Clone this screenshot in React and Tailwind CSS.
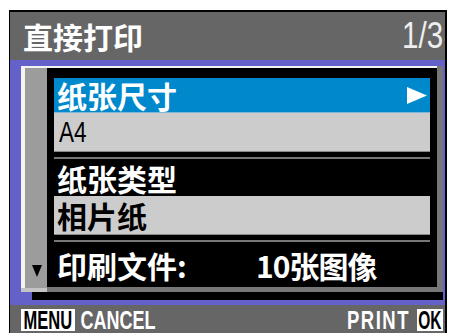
import React from "react";

const cjk = "font-['Noto_Sans_CJK_SC',sans-serif] font-bold";
const latin = "font-['Liberation_Sans',sans-serif]";

// one line in the black menu panel
const Row = ({ className, children }) => (
  <div className={`mx-[7px] flex items-center pl-[3px] ${className}`}>{children}</div>
);

const Label = ({ w, scale, className, children }) => (
  <div className={`flex h-[22px] items-center justify-center ${w} ${className}`}>
    <span className={`inline-block whitespace-nowrap ${scale}`}>{children}</span>
  </div>
);

export default function App() {
  return (
    <div className="h-[333px] w-[449px] overflow-hidden bg-white">
      <div className="ml-[9px] mt-[10px] flex h-[323px] w-[438px] flex-col border-l border-r-2 border-t-2 border-black">
        {/* title bar */}
        <div className="flex h-[48px] items-center justify-between bg-[#666666] pl-[13px] pr-[2px]">
          <span className={`${cjk} text-[30px] leading-none text-white`}>直接打印</span>
          <span className={`${latin} inline-block origin-right scale-x-[0.82] text-[36px] leading-none text-[#eeeeee]`}>
            1/3
          </span>
        </div>

        {/* purple body */}
        <div className="flex h-[245px] bg-[#6462c8] pl-[11px] pt-[6px]">
          <div className="flex h-[234px]">
            {/* left: scrollbar */}
            <div className="flex w-[26px] flex-col">
              <div className="h-[2px] bg-[#f4f4f4]" />
              <div className="flex h-[220px]">
                <div className="w-[4px] bg-[#f4f4f4]" />
                <div className="flex w-[22px] flex-col items-center justify-end bg-[#9c9c9c] pb-[11px] pl-[2px]">
                  <svg width="10" height="12" viewBox="0 0 10 12">
                    <polygon points="0,0 10,0 5,12" fill="#000" />
                  </svg>
                </div>
              </div>
              <div className="h-[4px] bg-[#c4c4c4]" />
              <div className="flex h-[8px]">
                <div className="w-[11px]" />
                <div className="flex-1 bg-black" />
              </div>
            </div>

            {/* centre: menu panel */}
            <div className="flex w-[390px] flex-col">
              <div className="h-[2px] bg-[#f4f4f4]" />
              <div className="flex h-[219px] flex-col bg-black pt-[10px]">
                <Row className="h-[35px] justify-between border-b border-[#7fb8dc] bg-[#0088cc] pr-[3px]">
                  <span className={`${cjk} text-[30px] leading-none text-white`}>纸张尺寸</span>
                  <svg width="20" height="17" viewBox="0 0 20 17">
                    <polygon points="0,0 20,8.5 0,17" fill="#fff" />
                  </svg>
                </Row>
                <Row className="h-[39px] border-b border-[#888888] bg-[#cccccc]">
                  <span className={`${latin} ml-[2px] inline-block origin-left scale-x-[0.75] text-[30px] leading-none text-black`}>
                    A4
                  </span>
                </Row>
                <div className="mx-[7px] mt-[5px] h-[2px] bg-[#777777]" />
                <Row className="h-[37px]">
                  <span className={`${cjk} text-[30px] leading-none text-white`}>纸张类型</span>
                </Row>
                <Row className="h-[39px] border-b border-[#888888] bg-[#cccccc]">
                  <span className={`${cjk} text-[30px] leading-none text-black`}>相片纸</span>
                </Row>
                <div className="mx-[7px] mt-[5px] h-[2px] bg-[#777777]" />
                <Row className="h-[45px]">
                  <span className={`${cjk} w-[199px] text-[30px] leading-none text-white`}>印刷文件:</span>
                  <span className={`${cjk} text-[30px] leading-none tracking-[-1px] text-white`}>10张图像</span>
                </Row>
              </div>
              <div className="h-[5px] bg-[#777777]" />
              <div className="h-[8px] bg-black" />
            </div>

            {/* right edge */}
            <div className="flex w-[6px] flex-col">
              <div className="h-[226px] bg-[#777777]" />
              <div className="h-[8px] bg-black" />
            </div>
          </div>
        </div>

        {/* key hints */}
        <div className="flex h-[28px] bg-[#666666] pl-[11px] pr-[2px] pt-[4px]">
          <Label w="w-[54px]" scale="scale-x-[0.66]" className={`${latin} bg-white text-[25px] font-bold leading-[22px] text-black`}>
            MENU
          </Label>
          <Label w="w-[79px] ml-[4px]" scale="scale-x-[0.72]" className={`${latin} text-[25px] font-bold leading-[22px] text-white`}>
            CANCEL
          </Label>
          <div className="flex-1" />
          <Label w="w-[70px]" scale="scale-x-[0.74] tracking-[2px]" className={`${latin} text-[25px] font-bold leading-[22px] text-white`}>
            PRINT
          </Label>
          <Label w="w-[26px] ml-[4px]" scale="scale-x-[0.62]" className={`${latin} bg-white text-[25px] font-bold leading-[22px] text-black`}>
            OK
          </Label>
        </div>
      </div>
    </div>
  );
}
